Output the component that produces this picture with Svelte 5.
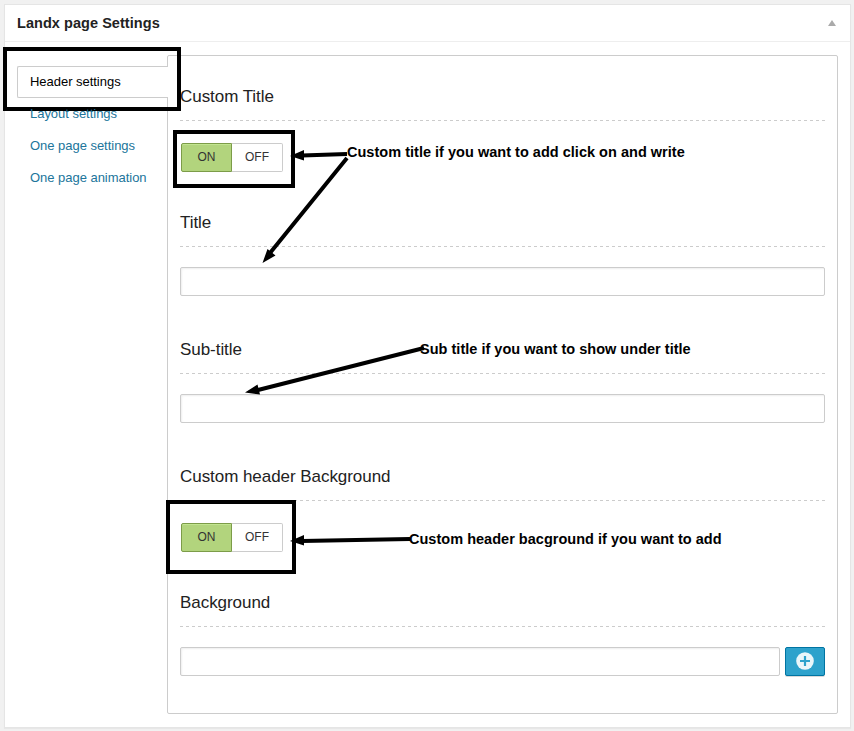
<script>
  const tabs = ['Header settings', 'Layout settings', 'One page settings', 'One page animation'];
  const sections = [
    { title: 'Custom Title', kind: 'toggle' },
    { title: 'Title', kind: 'input', tall: true },
    { title: 'Sub-title', kind: 'input', tall: true },
    { title: 'Custom header Background', kind: 'toggle' },
    { title: 'Background', kind: 'upload' }
  ];
</script>

<div class="page">
  <section class="panel">
    <header>
      <h2>Landx page Settings</h2>
      <svg width="8" height="6" viewBox="0 0 8 6"><path d="M4 0 8 6H0Z" fill="#aaa" /></svg>
    </header>
    <div class="body">
      <nav>
        {#each tabs as tab, i}
          <a class:active={i === 0} href="#tab-{i}">{tab}</a>
        {/each}
      </nav>
      <main>
        {#each sections as s}
          <div class="section" class:tall={s.tall}>
            <h3>{s.title}</h3>
            {#if s.kind === 'toggle'}
              <div class="toggle"><button class="on">ON</button><button class="off">OFF</button></div>
            {:else}
              <div class="field">
                <input type="text" aria-label={s.title} />
                {#if s.kind === 'upload'}
                  <button class="add" aria-label="Add">
                    <svg width="18" height="18" viewBox="0 0 18 18">
                      <circle cx="9" cy="9" r="8.8" fill="#eaf6fa" />
                      <path d="M9 4V14M4 9H14" stroke="#2ea2cc" stroke-width="2.2" />
                    </svg>
                  </button>
                {/if}
              </div>
            {/if}
          </div>
        {/each}
      </main>
    </div>
  </section>

  <div class="notes">
    <svg width="854" height="731" viewBox="0 0 854 731">
      <g fill="none" stroke="#000" stroke-width="4">
        <rect x="5" y="49" width="174" height="60" />
        <rect x="175" y="132" width="118" height="54" />
        <rect x="168" y="502" width="126" height="70" />
        <path d="M347 154 302 155.5M347 158 270 253M424 348 258 390M410 539 302 541" />
      </g>
      <path d="M290 156 304 150V160.500ZM262.500 263 267.500 249 275.500 255.500ZM245 392.500 257.500 384.500 260 394.500ZM290 541 304 535V545.500Z" />
    </svg>
    <span style="left:347px;top:144px">Custom title if you want to add click on and write</span>
    <span style="left:420px;top:341px">Sub title if you want to show under title</span>
    <span style="left:409px;top:531px">Custom header bacground if you want to add</span>
  </div>
</div>

<style>
  :global(body) { background: #f1f1f1; }
  .page {
    position: relative;
    width: 854px;
    height: 731px;
    box-sizing: border-box;
    padding: 4px 3px 3px 4px;
    overflow: hidden;
    font-family: "Liberation Sans", Arial, sans-serif;
    color: #222;
  }
  .page * { box-sizing: border-box; }
  .panel {
    height: 724px;
    background: #fff;
    border: 1px solid #e5e5e5;
    box-shadow: 0 1px 1px rgba(0, 0, 0, .04);
  }
  header {
    height: 37px;
    display: flex;
    align-items: center;
    justify-content: space-between;
    padding: 0 14px 0 12px;
    border-bottom: 1px solid #eee;
  }
  h2 { margin: 0; font-size: 14.5px; line-height: 20px; letter-spacing: .05px; }
  .body { display: flex; padding: 13px 12px 0; }
  nav { width: 151px; margin: 11px -1px 0 0; position: relative; z-index: 1; }
  nav a {
    display: block;
    height: 32px;
    padding-left: 13px;
    font-size: 13px;
    line-height: 31px;
    letter-spacing: -.03px;
    text-decoration: none;
    color: #21759b;
  }
  nav a.active {
    padding-left: 12px;
    line-height: 30px;
    color: #000;
    background: #fff;
    border: 1px solid #ccc;
    border-right: 0;
    border-radius: 2px 0 0 2px;
  }
  main {
    flex: 1;
    height: 659px;
    padding: 21px 12px 0;
    border: 1px solid #ccc;
    border-radius: 2px;
  }
  .section { height: 126px; }
  .section.tall { height: 127px; }
  h3 {
    height: 44px;
    margin: 0;
    font-size: 17px;
    font-weight: 400;
    line-height: 40px;
    letter-spacing: -.05px;
    background: repeating-linear-gradient(90deg, #ccc 0 3px, transparent 3px 6px) bottom / 100% 1px no-repeat;
  }
  button { font: inherit; padding: 0; margin: 0; }
  .toggle { display: flex; padding: 22px 0 0 1px; }
  .toggle button {
    height: 29px;
    font-size: 12px;
    line-height: 26px;
    color: #333;
    padding-bottom: 1px;
  }
  .on {
    width: 51px;
    background: #b2d47d;
    border: 1px solid #7c9c48;
    border-radius: 2px 0 0 2px;
    box-shadow: inset 0 1px 0 #c2e590;
  }
  .off {
    width: 51px;
    background: #fff;
    border: 1px solid #ccc;
    border-left: 0;
    border-radius: 0 2px 2px 0;
  }
  .field { display: flex; gap: 5px; padding-top: 20px; }
  input {
    flex: 1;
    min-width: 0;
    height: 29px;
    border: 1px solid #ccc;
    border-radius: 2px;
    background: #fff;
    box-shadow: inset 1px 1px 2px rgba(0, 0, 0, .07);
  }
  .add {
    width: 40px;
    height: 29px;
    display: flex;
    align-items: flex-start;
    justify-content: center;
    padding-top: 4px;
    background: #2ea2cc;
    border: 1px solid #0074a2;
    border-radius: 2px;
    box-shadow: 0 1px 0 rgba(0, 0, 0, .15);
  }
  .notes { position: absolute; inset: 0; pointer-events: none; }
  .notes svg { position: absolute; inset: 0; }
  .notes span {
    position: absolute;
    white-space: nowrap;
    font-size: 14.5px;
    line-height: 16px;
    font-weight: 700;
    letter-spacing: .02px;
    color: #000;
  }
</style>
